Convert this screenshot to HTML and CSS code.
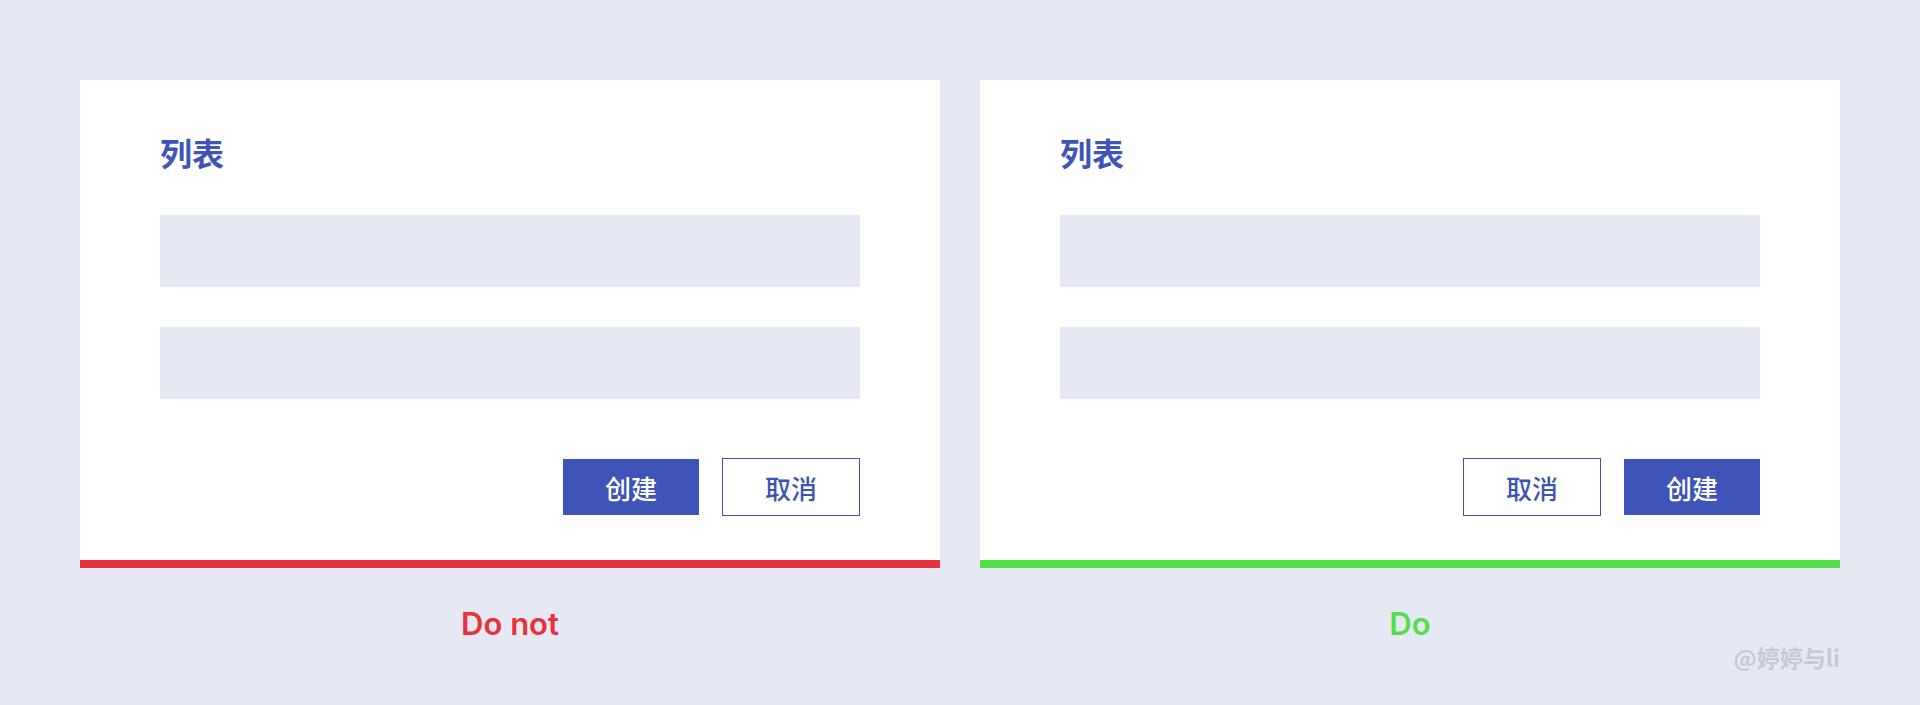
FILE: index.html
```html
<!DOCTYPE html>
<html lang="zh-CN">
<head>
<meta charset="utf-8">
<title>Do / Do not</title>
<link rel="stylesheet" href="styles.css">
</head>
<body>
<div class="page">
  <div class="examples">
    <div class="example">
      <div class="card card-bad">
        <div class="card-title">列表</div>
        <div class="field"></div>
        <div class="field"></div>
        <div class="actions">
          <button class="btn btn-primary">创建</button>
          <button class="btn btn-outline">取消</button>
        </div>
      </div>
      <div class="label label-bad">Do not</div>
    </div>
    <div class="example">
      <div class="card card-good">
        <div class="card-title">列表</div>
        <div class="field"></div>
        <div class="field"></div>
        <div class="actions">
          <button class="btn btn-outline">取消</button>
          <button class="btn btn-primary">创建</button>
        </div>
      </div>
      <div class="label label-good">Do</div>
    </div>
  </div>
  <div class="watermark">@婷婷与li</div>
</div>
</body>
</html>
```

FILE: styles.css
```css
* { box-sizing: border-box; }
html, body {
  margin: 0;
  padding: 0;
  background: #e6e9f3;
}
body {
  font-family: "Noto Sans CJK SC", "Noto Sans", sans-serif;
  width: 1920px;
  height: 705px;
  overflow: hidden;
}
.page {
  position: relative;
  height: 705px;
  padding: 80px 80px 0;
}
.examples {
  display: grid;
  grid-template-columns: 860px 860px;
  gap: 40px;
}
.example {
  display: flex;
  flex-direction: column;
}
.card {
  background: #ffffff;
  height: 488px;
  padding: 52px 80px 0;
  border-bottom: 8px solid #e5323b;
  display: flex;
  flex-direction: column;
}
.card-good { border-bottom-color: #54df4a; }
.card-title {
  font-size: 32px;
  line-height: 40px;
  font-weight: 700;
  color: #3f54b9;
  height: 40px;
}
.field {
  height: 72px;
  background: #e6e9f3;
  margin-top: 40px;
}
.card-title + .field { margin-top: 43px; }
.actions {
  margin-top: 59px;
  display: flex;
  justify-content: flex-end;
  align-items: center;
  gap: 23px;
}
.btn {
  font-family: "Noto Sans CJK SC", sans-serif;
  font-size: 26px;
  font-weight: 500;
  padding: 0;
  margin: 0;
  cursor: pointer;
  display: flex;
  align-items: center;
  justify-content: center;
}
.btn-primary {
  width: 136px;
  height: 56px;
  background: #3f54b9;
  color: #ffffff;
  border: none;
}
.btn-outline {
  width: 138px;
  height: 58px;
  background: #ffffff;
  color: #3f54b0;
  border: 1.5px solid #3f54a3;
}
.label {
  margin-top: 38px;
  text-align: center;
  font-family: Inter, "Noto Sans", sans-serif;
  font-size: 31px;
  line-height: 36px;
  font-weight: 600;
}
.label-bad { color: #e5323b; }
.label-good { color: #54df4a; }
.watermark {
  position: absolute;
  right: 80px;
  top: 640px;
  font-size: 23px;
  line-height: 34px;
  font-weight: 700;
  color: #c6c9d3;
}
```
